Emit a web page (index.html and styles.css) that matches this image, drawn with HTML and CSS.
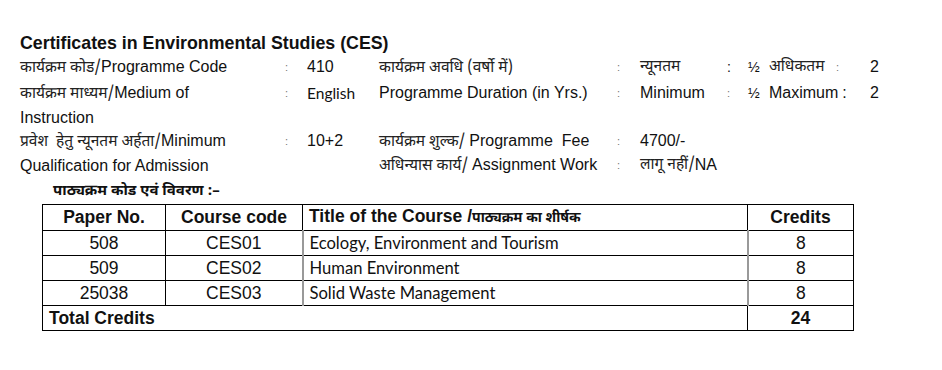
FILE: index.html
```html
<!DOCTYPE html>
<html>
<head>
<meta charset="utf-8">
<link rel="stylesheet" href="styles.css">
</head>
<body>
<div class="page">
  <h1 class="title">Certificates in Environmental Studies (CES)</h1>
  <div class="info">
    <div class="lbl"><span class="hi">कार्यक्रम कोड/</span>Programme Code</div>
    <div class="col">:</div>
    <div class="val">410</div>
    <div class="lbl2"><span class="hi">कार्यक्रम अवधि (वर्षो में)</span></div>
    <div class="col">:</div>
    <div class="rest"><span class="m1 hi">न्यूनतम</span><span class="c1 dark">:</span><span class="half">½</span><span class="m2 hi">अधिकतम</span><span class="c2">:</span><span class="num">2</span></div>

    <div class="lbl span2"><span class="hi">कार्यक्रम माध्यम/</span>Medium of<br>Instruction</div>
    <div class="col">:</div>
    <div class="val cal">English</div>
    <div class="lbl2">Programme Duration (in Yrs.)</div>
    <div class="col">:</div>
    <div class="rest"><span class="m1">Minimum</span><span class="c1">:</span><span class="half">½</span><span class="m2">Maximum<span class="c3">:</span></span><span class="c2"></span><span class="num">2</span></div>
    <div class="blank"></div>

    <div class="lbl span2"><span class="hi">प्रवेश &nbsp;हेतु न्यूनतम अर्हता/</span>Minimum<br>Qualification for Admission</div>
    <div class="col">:</div>
    <div class="val">10+2</div>
    <div class="lbl2"><span class="hi">कार्यक्रम शुल्क/ </span>Programme &nbsp;Fee</div>
    <div class="col">:</div>
    <div class="rest">4700/-</div>
    <div class="lbl2 c4"><span class="hi">अधिन्यास कार्य/ </span>Assignment Work</div>
    <div class="col">:</div>
    <div class="rest"><span class="hi">लागू नहीं/ </span>NA</div>
  </div>
  <div class="subhead">पाठ्यक्रम कोड एवं विवरण :–</div>
  <table class="courses">
    <colgroup>
      <col class="w1"><col class="w2"><col class="w3"><col class="w4">
    </colgroup>
    <thead>
      <tr>
        <th>Paper No.</th>
        <th>Course code</th>
        <th class="left">Title of the Course /<span class="hib">पाठ्यक्रम का शीर्षक</span></th>
        <th>Credits</th>
      </tr>
    </thead>
    <tbody>
      <tr><td>508</td><td>CES01</td><td class="t">Ecology, Environment and Tourism</td><td class="cr">8</td></tr>
      <tr><td>509</td><td>CES02</td><td class="t">Human Environment</td><td class="cr">8</td></tr>
      <tr><td>25038</td><td>CES03</td><td class="t">Solid Waste Management</td><td class="cr">8</td></tr>
      <tr class="total"><td colspan="3" class="left">Total Credits</td><td>24</td></tr>
    </tbody>
  </table>
</div>
</body>
</html>
```
FILE: styles.css
```css
html, body {
  margin: 0;
  background: #fff;
}
body {
  font-family: "Liberation Sans", Arial, "Noto Sans", sans-serif;
  color: #111;
}
.page {
  padding: 32px 0 0 20px;
}
.title {
  margin: 0;
  font-size: 17.8px;
  font-weight: bold;
  line-height: 22px;
  height: 23px;
}
.info {
  display: grid;
  grid-template-columns: 265px 22px 72px 238px 23px 1fr;
  grid-template-rows: 26px 24px 24px 24px 24px;
  font-size: 16px;
  line-height: 24px;
}
.span2 { grid-row: span 2; }
.blank { grid-column: 2 / -1; }
.c4 { grid-column: 4; }
.hi {
  font-family: "Noto Sans Devanagari", "Lohit Devanagari", "Noto Sans", sans-serif;
  font-size: 15.5px;
  color: #222;
}
.col {
  font-size: 11px;
  color: #777;
}
.cal {
  font-family: Lato, "Open Sans", sans-serif;
  font-size: 15.5px;
}
.rest {
  display: flex;
  white-space: nowrap;
}
.m1 { width: 87px; }
.c1 { width: 21px; font-size: 11px; color: #777; }
.c1.dark { color: #111; font-size: 14px; }
.half { width: 21px; font-size: 14px; }
.m2 { width: 67px; }
.c2 { width: 34px; font-size: 11px; color: #777; }
.c3 { margin-left: 4px; }
.num { width: 20px; }
.subhead {
  margin-left: 33px;
  padding-top: 3px;
  font-family: "Noto Sans Devanagari", "Noto Sans", sans-serif;
  font-weight: bold;
  font-size: 15px;
  line-height: 24px;
  height: 24px;
}
.courses {
  margin-left: 22px;
  border-collapse: collapse;
  width: 811px;
  table-layout: fixed;
}
.w1 { width: 123px; }
.w2 { width: 137px; }
.w3 { width: 445px; }
.w4 { width: 106px; }
.courses th, .courses td {
  border: 1px solid #000;
  padding: 0 6px;
  height: 24px;
  text-align: center;
  font-size: 17.5px;
  line-height: 23px;
}
.courses th { font-weight: bold; }
.courses .left { text-align: left; }
.courses td.t {
  text-align: left;
  font-family: Lato, "Open Sans", sans-serif;
  font-size: 16.6px;
  border-left: 2px solid #999;
}
.courses td.cr {
  border-left: 2px solid #999;
}
.hib {
  font-family: "Noto Sans Devanagari", "Noto Sans", sans-serif;
  font-size: 14px;
}
.total td { font-weight: bold; }
```
